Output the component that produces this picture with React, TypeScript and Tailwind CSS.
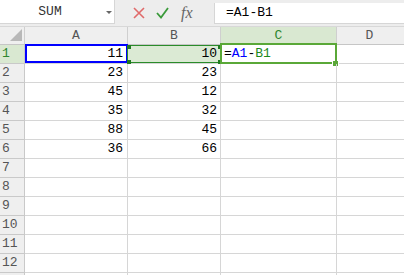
import React from "react";

const A = ["11", "23", "45", "35", "88", "36"];
const B = ["10", "23", "12", "32", "45", "66"];

const mono = { fontFamily: '"Liberation Mono", "DejaVu Sans Mono", monospace' };

function Row({ i }: { i: number }) {
  const r = i + 1;
  const first = r === 1;
  return (
    <div className="flex h-[19px] shrink-0">
      <div
        className={`w-[25px] shrink-0 border-r border-b border-[#c9c9c9] flex items-center pl-[2px] text-[13px] ${
          first ? "bg-[#d9e8d1] text-[#2f862f]" : "bg-[#efefef] text-[#555]"
        }`}
      >
        {r <= 12 ? r : ""}
      </div>
      <div className="w-[103px] shrink-0 border-r border-b border-[#d6d6d6] relative flex items-center justify-end pr-[4px] text-[13px] text-black">
        {A[i] ?? ""}
        {first && (
          <div className="absolute left-0 top-[-1px] w-[103px] h-[19px] border-2 border-[#0000ff]" />
        )}
      </div>
      <div
        className={`w-[93px] shrink-0 border-r border-b border-[#d6d6d6] relative flex items-center justify-end pr-[3px] text-[13px] text-black ${
          first ? "bg-[#dbead4]" : ""
        }`}
      >
        {B[i] ?? ""}
        {first && (
          <>
            <div className="absolute left-[-1px] top-0 w-[94px] h-[18px] border border-[#2a8c2a]" />
            <div className="absolute left-[-1px] top-0 w-[4px] h-[4px] bg-[#1f7a1f]" />
            <div className="absolute right-[-2px] top-0 w-[4px] h-[4px] bg-[#1f7a1f]" />
            <div className="absolute left-[-1px] top-[15px] w-[4px] h-[4px] bg-[#1f7a1f]" />
            <div className="absolute right-[-2px] top-[15px] w-[4px] h-[4px] bg-[#1f7a1f]" />
          </>
        )}
      </div>
      <div className="w-[116px] shrink-0 border-r border-b border-[#d6d6d6] relative flex items-center pl-[3px] text-[13px]">
        {first && (
          <>
            <span className="text-black">=</span>
            <span className="text-[#0000ff]">A1</span>
            <span className="text-black">-</span>
            <span className="text-[#1c8a1c]">B1</span>
            <div className="absolute left-[-1px] top-[-2px] w-[117px] h-[21px] border-2 border-[#5aa838]" />
            <div className="absolute left-[111px] top-[16px] w-[7px] h-[7px] bg-white" />
            <div className="absolute left-[112px] top-[16px] w-[5px] h-[5px] bg-[#5aa838]" />
          </>
        )}
      </div>
      <div className="flex-1 border-b border-[#d6d6d6]" />
    </div>
  );
}

export default function App() {
  return (
    <div className="w-[404px] h-[275px] overflow-hidden bg-white flex flex-col" style={mono}>
      {/* top bar */}
      <div className="h-[27px] shrink-0 flex bg-[#ededed] border-b border-[#d8d8d8]">
        <div className="w-[115px] h-[24px] bg-white border-r border-b border-[#d6d6d6] relative flex items-center">
          <span className="w-[100px] text-center text-[13px] text-[#333]">SUM</span>
          <svg className="absolute left-[106px] top-[11px]" width="6" height="4" viewBox="0 0 6 4">
            <path d="M0 0 L6 0 L3 3 Z" fill="#666" />
          </svg>
        </div>
        <div className="w-[99px] flex items-center h-[26px]">
          <svg className="ml-[18px]" width="12" height="12" viewBox="0 0 12 12">
            <path d="M1 1 L11 11 M11 1 L1 11" stroke="#e06a6a" strokeWidth="1.6" fill="none" />
          </svg>
          <svg className="ml-[11px]" width="13" height="12" viewBox="0 0 13 12">
            <path d="M1 6 L5 10.5 L12 1" stroke="#3a9a3a" strokeWidth="1.8" fill="none" />
          </svg>
          <span
            className="ml-[12px] text-[16px] italic text-[#666] leading-none"
            style={{ fontFamily: '"Liberation Serif", "DejaVu Serif", serif' }}
          >
            fx
          </span>
        </div>
        <div className="flex-1 mt-[3px] h-[21px] bg-white border-b border-l border-[#d6d6d6] flex items-center pl-[11px] text-[13px] text-black">
          =A1-B1
        </div>
      </div>
      {/* header */}
      <div className="h-[18px] shrink-0 flex bg-[#efefef] border-b border-[#c6c6c6] text-[13px] text-[#555]">
        <div className="w-[25px] shrink-0 border-r border-[#cfcfcf] relative">
          <svg className="absolute left-[10px] top-[2px]" width="12" height="12" viewBox="0 0 12 12">
            <path d="M12 0 L12 12 L0 12 Z" fill="#b8b8b8" />
          </svg>
        </div>
        <div className="w-[103px] shrink-0 border-r border-[#cfcfcf] flex items-center justify-center">A</div>
        <div className="w-[93px] shrink-0 border-r border-[#cfcfcf] flex items-center justify-center">B</div>
        <div className="w-[116px] shrink-0 border-r border-[#cfcfcf] bg-[#d9e8d1] text-[#2f862f] flex items-center justify-center">
          C
        </div>
        <div className="flex-1 flex items-center justify-center pr-[2px]">D</div>
      </div>
      {Array.from({ length: 13 }, (_, i) => (
        <Row key={i} i={i} />
      ))}
    </div>
  );
}
